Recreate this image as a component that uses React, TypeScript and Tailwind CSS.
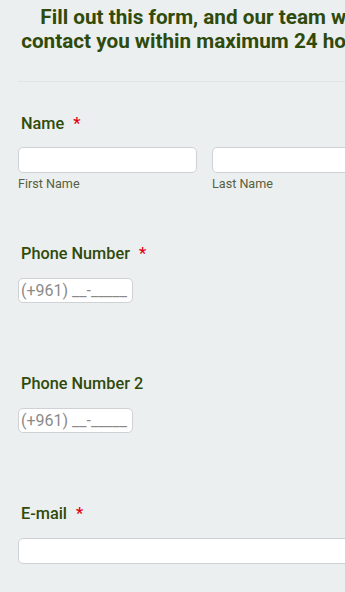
const labelCls = "text-[16.3px] font-medium text-[#2f4a0a] pl-[3px] leading-[20px]";

function Req() {
    return <span className="text-[#e3000f] ml-[9px]">*</span>;
}

function PhoneField({ label, required }: { label: string; required?: boolean }) {
    return (
        <div className="flex flex-col">
            <div className={labelCls}>
                {label}
                {required && <Req />}
            </div>
            <div className="mt-[14px] w-[115px] h-[25px] bg-white border border-[#cfd2d4] rounded-[5px] flex items-center px-[2px]">
                <span className="text-[16px] text-[#8a8a8a] leading-[20px]">(+961) __-_____</span>
            </div>
        </div>
    );
}

export default function App() {
    return (
        <div className="w-[345px] h-[592px] overflow-hidden bg-[#eceff0]" style={{ fontFamily: 'Roboto, "Liberation Sans", sans-serif' }}>
            <div className="w-[391px] ml-[18px] pt-[5px]">
                <h1 className="mr-[24px] text-center text-[20.7px] font-bold leading-[24px] text-[#2f4a0a] whitespace-nowrap">
                    Fill out this form, and our team will
                    <br />
                    contact you within maximum 24 hours.
                </h1>
                <div className="mt-[28px] h-px bg-[#e2e5e6]" />

                <div className="mt-[32px]">
                    <div className={labelCls}>
                        Name
                        <Req />
                    </div>
                    <div className="mt-[13px] flex gap-[15px]">
                        <div className="flex flex-col w-[179px]">
                            <div className="h-[26px] bg-white border border-[#cfd2d4] rounded-[5px]" />
                            <span className="mt-[4px] text-[12.6px] text-[#56603f] leading-[14px]">First Name</span>
                        </div>
                        <div className="flex flex-col w-[179px]">
                            <div className="h-[26px] bg-white border border-[#cfd2d4] rounded-[5px]" />
                            <span className="mt-[4px] text-[12.6px] text-[#56603f] leading-[14px]">Last Name</span>
                        </div>
                    </div>
                </div>

                <div className="mt-[53px]">
                    <PhoneField label="Phone Number" required />
                </div>
                <div className="mt-[71px]">
                    <PhoneField label="Phone Number 2" />
                </div>

                <div className="mt-[71px]">
                    <div className={labelCls}>
                        E-mail
                        <Req />
                    </div>
                    <div className="mt-[14px] h-[26px] bg-white border border-[#cfd2d4] rounded-[5px]" />
                </div>
            </div>
        </div>
    );
}
